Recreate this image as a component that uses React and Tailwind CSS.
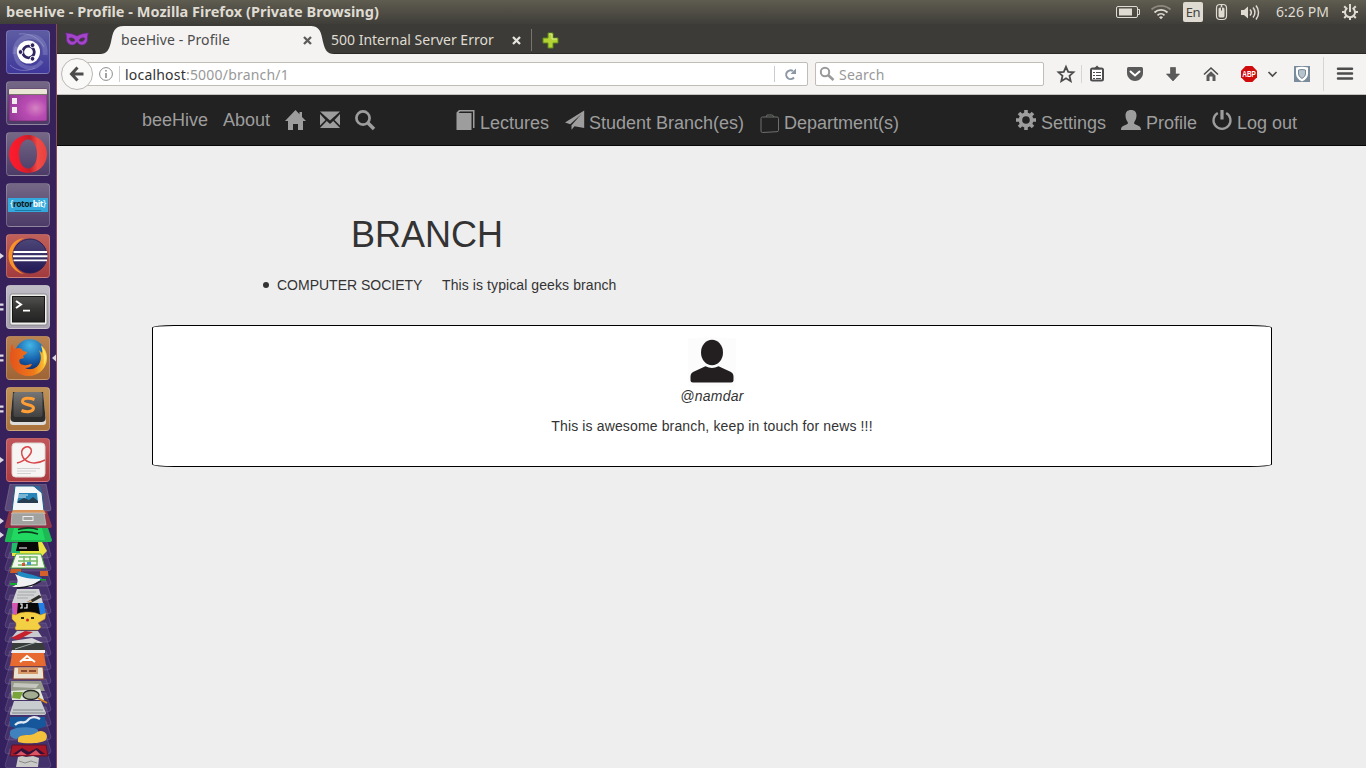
import React from "react";

const ui = "font-['Noto_Sans','Open_Sans',sans-serif] whitespace-nowrap";

/* ---------- launcher ---------- */

function Marker({ kind }) {
  return (
    <svg className="block h-[44px] w-[6px] shrink-0" viewBox="0 0 6 44" fill="#dcd9e2">
      {kind === "arrow" && <path d="M0 19L4 22L0 25Z" />}
      {kind === "bars" && <path d="M0 18.5h3.5v2.2H0zM0 23.3h3.5v2.2H0z" />}
      {kind === "focus" && <path d="M6 18.5L2 22L6 25.5Z" />}
    </svg>
  );
}

function Tile({ left, right, tone, children }) {
  return (
    <div className="flex h-[44px] w-[56px] shrink-0">
      <Marker kind={left} />
      <div className={"flex h-[44px] w-[44px] items-center justify-center overflow-hidden rounded-[4px] border border-white/20 " + tone}>
        {children}
      </div>
      <Marker kind={right} />
    </div>
  );
}

const plain = "bg-linear-to-b from-[#756886] to-[#4c3b67]";

function Launcher() {
  return (
    <div className="flex h-[744px] w-[57px] shrink-0 flex-col gap-[7px] overflow-hidden border-r border-[#8d4a5e] bg-linear-to-b from-[#36215a] via-[#38215b] to-[#33205e] pt-[6px]">
      <Tile tone="bg-linear-to-b from-[#5d5ca2] to-[#40379b]">
        <svg className="h-[42px] w-[42px] shrink-0" viewBox="0 0 42 42">
          <g fill="none" stroke="#aaa9db">
            <path d="M8 23C7 11 17 4 27 6c8 2 12 9 11 18" strokeWidth="5" opacity=".3" />
            <path d="M10 16c-4 8 0 17 8 20 7 2 13 0 17-6" strokeWidth="4" opacity=".35" />
            <path d="M12 3c10-1 20 3 25 13M3 34c6 6 16 7 25 3" opacity=".5" />
          </g>
          <circle cx="21.500" cy="21" r="11.500" fill="#fff" />
          <circle cx="21.500" cy="21" r="5.800" fill="none" stroke="#30265f" strokeWidth="2.800" />
          <g fill="#30265f" stroke="#fff" strokeWidth="1">
            <circle cx="13.500" cy="21" r="2.400" />
            <circle cx="25.500" cy="14.200" r="2.400" />
            <circle cx="25.500" cy="27.800" r="2.400" />
          </g>
        </svg>
      </Tile>

      <Tile tone={plain}>
        <svg className="h-[42px] w-[42px] shrink-0" viewBox="0 0 42 42">
          <defs>
            <radialGradient id="desk" cx=".7" cy=".6" r=".75">
              <stop offset="0" stopColor="#d582c2" />
              <stop offset=".4" stopColor="#b84bb2" />
              <stop offset="1" stopColor="#963b9a" />
            </radialGradient>
          </defs>
          <rect x="2" y="7" width="38" height="32" rx="1.5" fill="url(#desk)" stroke="#65265f" strokeWidth=".6" />
          <rect x="2" y="7" width="38" height="5.5" rx="1" fill="#e9e6d5" />
          <path d="M2 12.5h38" stroke="#7c7668" />
          <path d="M5 16h5v6H5zM5 25h5v6H5z" fill="#f2eef0" />
        </svg>
      </Tile>

      <Tile tone={plain}>
        <svg className="h-[42px] w-[42px] shrink-0" viewBox="0 0 42 42">
          <defs>
            <linearGradient id="op" x1="0" y1="0" x2="1" y2="0">
              <stop offset="0" stopColor="#ff1b2d" />
              <stop offset=".3" stopColor="#ee1c2b" />
              <stop offset=".55" stopColor="#c4202a" />
              <stop offset=".75" stopColor="#f04b46" />
              <stop offset="1" stopColor="#e8403e" />
            </linearGradient>
          </defs>
          <path fillRule="evenodd" fill="url(#op)" d="M21 2a19 19 0 1 1 0 38a19 19 0 1 1 0-38ZM21 6.500c-5.500 0-9 6.500-9 14.500s3.500 14.500 9 14.500s9-6.500 9-14.500s-3.500-14.500-9-14.500Z" />
        </svg>
      </Tile>

      <Tile tone={plain}>
        <div className="flex h-[14px] w-[40px] shrink-0 flex-col items-center overflow-hidden bg-[#35a9dc] pt-[1px]">
          <span className="font-['Noto_Sans','Liberation_Sans',sans-serif] text-[8.5px] leading-[10px] font-bold tracking-[-0.4px] whitespace-nowrap text-[#111a20]">
            <span className="font-normal text-white">{"{"}</span>rotor<span className="text-white">bit</span><span className="font-normal text-white">{"}"}</span>
          </span>
          <span className="mt-[1px] h-px w-[26px] bg-[#1d7ba6]" />
        </div>
      </Tile>

      <Tile left="arrow" tone="bg-linear-to-b from-[#c0605a] to-[#a23b3e]">
        <svg className="h-[42px] w-[42px] shrink-0" viewBox="0 0 42 42">
          <defs>
            <linearGradient id="ec" x1="0" y1="0" x2="0" y2="1">
              <stop offset="0" stopColor="#4d4677" />
              <stop offset="1" stopColor="#221956" />
            </linearGradient>
          </defs>
          <path fill="#f6942a" d="M17 3C7 4 1.500 12 1.500 21S8 37.500 17 39C9 35 5.500 29 5.500 21S9 7 17 3Z" />
          <circle cx="23" cy="21" r="17" fill="url(#ec)" stroke="#2a2058" />
          <path d="M6.500 17h33.500M6 21.200h34.500M6.500 25.400h33.500" stroke="#fff" strokeWidth="1.900" />
        </svg>
      </Tile>

      <Tile left="bars" tone="bg-linear-to-b from-[#c0bcc6] to-[#a8a2b0]">
        <svg className="h-[42px] w-[42px] shrink-0" viewBox="0 0 42 42">
          <defs>
            <linearGradient id="te" x1="0" y1="0" x2="0" y2="1">
              <stop offset="0" stopColor="#51524f" />
              <stop offset=".5" stopColor="#343533" />
              <stop offset="1" stopColor="#222" />
            </linearGradient>
          </defs>
          <rect x="3" y="8" width="37" height="31" rx="2" fill="#eeeeec" stroke="#77757a" strokeWidth=".7" />
          <rect x="5.500" y="10.500" width="32" height="25.500" fill="url(#te)" stroke="#161616" />
          <path d="M9 15l5 3.500-5 3.500" fill="none" stroke="#fff" strokeWidth="2" />
          <path d="M16 24.700h7" stroke="#fff" strokeWidth="1.800" />
        </svg>
      </Tile>

      <Tile left="bars" right="focus" tone="bg-linear-to-b from-[#ba8250] to-[#9e6435]">
        <svg className="h-[42px] w-[42px] shrink-0" viewBox="0 0 42 42">
          <defs>
            <radialGradient id="gl" cx=".5" cy=".2" r=".8">
              <stop offset="0" stopColor="#43b5e5" />
              <stop offset=".6" stopColor="#1763ad" />
              <stop offset="1" stopColor="#0d2e70" />
            </radialGradient>
            <linearGradient id="fx" x1="0" y1="0" x2="1" y2="0">
              <stop offset="0" stopColor="#e4531b" />
              <stop offset=".65" stopColor="#ee7a1a" />
              <stop offset="1" stopColor="#fbd43a" />
            </linearGradient>
          </defs>
          <circle cx="23" cy="17.500" r="15.300" fill="url(#gl)" />
          <path fill="url(#fx)" d="M5 7l2 5 4-1c3 0 4 1 5 3l4 1c0 2-3 3-4 4l1 2-4 1c-2 3 1 6 4 6 3 1 4-1 8-1-1 3-4 4-7 4 6 3 13 0 15-6 2-5 0-9-1-12l3 3c1-3 0-5-1-8 5 4 6 9 6 13 0 10-8 18-18.500 18S3 31 3 21c0-3 0-5 1-7C3 12 4 9 5 7Z" />
          <path fill="#ffe267" d="M34 9c5 4 7 12 3 19 0-7 0-12-3-19Z" />
        </svg>
      </Tile>

      <Tile left="bars" tone="bg-linear-to-b from-[#c09358] to-[#aa723c]">
        <svg className="h-[42px] w-[42px] shrink-0" viewBox="0 0 42 42">
          <defs>
            <linearGradient id="su" x1="0" y1="0" x2="0" y2="1">
              <stop offset="0" stopColor="#757575" />
              <stop offset="1" stopColor="#414141" />
            </linearGradient>
          </defs>
          <path d="M6 5h30l3 29q0 3-3 3H6q-3 0-3-3Z" fill="#dddcda" />
          <path d="M6 4h30l2.500 26q0 4-4 4h-27q-4 0-4-4Z" fill="#2c2c2c" />
          <rect x="6.500" y="4" width="29" height="25" rx="2" fill="url(#su)" />
          <path d="M27.500 11.500c-5-2-12-2-12 2 0 4 11 2.500 11 6.500 0 4-7 4.500-12 2.500" fill="none" stroke="#ff9e35" strokeWidth="3" />
        </svg>
      </Tile>

      <Tile left="arrow" tone="bg-linear-to-b from-[#c2575b] to-[#ac3b40]">
        <svg className="h-[42px] w-[42px] shrink-0" viewBox="0 0 42 42">
          <rect x="5" y="4" width="33" height="34" rx="3.500" fill="#f7f5f4" stroke="#ddd3d0" />
          <path d="M10 24c9-2 16-10 14-14-3-5-11-1-9 6 2 7 12 11 23 5" fill="none" stroke="#d8484b" strokeWidth="1.500" />
          <path d="M10 29.500h23M10 32h19M10 34.500h14" stroke="#d2d0d0" strokeWidth="1" />
        </svg>
      </Tile>

      <FoldedStack />
    </div>
  );
}

/* Collapsed launcher entries, each squeezed into a trapezoid. */
function FoldedStack() {
  const slabs = [62, 75, 90, 104, 118, 132, 146, 160, 174, 188, 202, 216, 230, 244, 258, 272];
  return (
    <svg className="mt-[-5px] block h-[284px] w-[56px] shrink-0" viewBox="0 0 56 284">
      <g fill="#dcd9e2">
        <path d="M0 34l4 3-4 3zM0 48l4 3-4 3z" />
      </g>
      <g fill="#a99dc0" fillOpacity=".14" stroke="#b7abd0" strokeOpacity=".2">
        {slabs.map((y) => (
          <path key={y} d={`M10 ${y - 7}H46L51 ${y + 9}Q51 ${y + 12} 47 ${y + 12}H8Q5 ${y + 12} 5 ${y + 9}Z`} />
        ))}
      </g>
      {/* writer */}
      <path d="M10 0H46L51 25Q51 27 48 27H8Q5 27 5 25Z" fill="#64557f" fillOpacity=".8" stroke="#8a7ea6" strokeWidth=".5" />
      <path d="M15 2h19l8 7 2 18H12Z" fill="#f4f7f8" stroke="#205b87" />
      <path d="M33 2h7l2 7Z" fill="#32699c" />
      <path d="M19 9h18l1 10H17Z" fill="#2784b8" />
      <path d="M18 17l6-3 5 2 4-3 5 4v2H18Z" fill="#263e50" />
      <path d="M18 11h10M18 13h8" stroke="#cbe4ef" />
      {/* drawer */}
      <path d="M9 27h38l5 15q0 2-3 2H7q-3 0-2-2Z" fill="#8e3548" />
      <path d="M13 26h31l2 4H11Z" fill="#d8945a" />
      <path d="M12 29h32l2 12H11Z" fill="#a1a1a0" stroke="#c8c8c6" strokeWidth=".7" />
      <rect x="23" y="32.500" width="10" height="4" fill="none" stroke="#eee" />
      {/* spotify */}
      <path d="M8 44h40l4 12q0 2-3 2H7q-3 0-2-2Z" fill="#1eb955" />
      <path d="M14 44h28l3 12H11Z" fill="#21d960" />
      <path d="M18 45.500c7-2 14-2 20 0M18 49c7-2 14-1 20 1" fill="none" stroke="#103c20" strokeWidth="1.700" />
      {/* ide */}
      <path d="M12 59l30-1 5 9-5 5H12Z" fill="#e9e344" />
      <path d="M12 59h8v10h-9Z" fill="#20bb6b" />
      <path d="M18 58h20l1 9H16Z" fill="#070707" />
      <path d="M19 64h8" stroke="#fff" />
      {/* calc */}
      <path d="M16 70h25l4 14H11Z" fill="#f3f7ec" stroke="#46a836" />
      <path d="M19 73h18v8H18M24 72v9M30 72v9M18 77h20" fill="none" stroke="#74b865" strokeWidth="1.500" />
      <path d="M22 79h3v3h-3z" fill="#d65238" />
      <path d="M27 78h4v3h-4z" fill="#3f96cc" />
      {/* mixed row */}
      <path d="M11 85h10v4H10Z" fill="#cc5c22" />
      <path d="M17 87l16 4 9 3-2 3-22-4Z" fill="#1e8bc2" />
      <path d="M40 87h8v5h-8Z" fill="#d4602b" />
      <path d="M15 90c8 4 14 5 28 5-5 2-9 4-11 8H12c8-3 6-8 3-13Z" fill="#f0f1f3" />
      <path d="M10 99h7v2h-7zM40 95h6v1.500h-6z" fill="#11ac2b" />
      <path d="M17 104q15-1 24-7" fill="none" stroke="#17191c" strokeWidth="1.300" />
      {/* intellij */}
      <path d="M12 119h32l2 12-5 3H12Z" fill="#257ee4" />
      <path d="M12 119h8v13h-7Z" fill="#d854ac" />
      <path d="M18 118h20l2 12H17Z" fill="#080808" />
      <path d="M20 120h2v4h-2M27 120v4h-3" fill="none" stroke="#fff" strokeWidth="1.200" />
      {/* editor */}
      <path d="M17 105h22l4 14H12Z" fill="#d1d2d4" />
      <path d="M18 108h18M17 111h17M17 114h11" stroke="#999ca0" strokeWidth=".8" />
      <path d="M27 118l12-7 3 2-11 6Z" fill="#2c2b28" />
      <path d="M27 118l4-2 1 2Z" fill="#ddb67b" />
      {/* yellow face */}
      <path d="M12 130l4 1c3-4 20-4 24 0l6-2-1 6-7 4 3 4-3 3H16q-2-2 0-4v-3l-4-4Z" fill="#f3d043" stroke="#b97f20" strokeWidth=".5" />
      <path d="M21 134h3M31 134h3" stroke="#2d2721" strokeWidth="1.800" />
      <circle cx="27.500" cy="136" r="1.500" fill="#c92c20" />
      <path d="M17 147h21l4 6H12Z" fill="#c9c9d0" />
      <path d="M11 154l14-7 8 1-15 8Z" fill="#c5202b" />
      <path d="M12 157l20-3 11 5H12Z" fill="#d9d9dc" />
      {/* scanner */}
      <path d="M13 159h30l2 7H11Z" fill="#383c3b" />
      <path d="M15 165l22-7" stroke="#9faaa8" />
      <path d="M12 166h33v3H11Z" fill="#eee" />
      {/* software */}
      <path d="M12 169h32l2 13H10Z" fill="#e76b31" />
      <path d="M20 178l7-6 8 6M23 176h10" fill="none" stroke="#fff" strokeWidth="2" />
      {/* present */}
      <path d="M14 183h29l1 12H13Z" fill="#eae2d5" stroke="#8b3b1f" />
      <path d="M18 184h20v6H18Z" fill="#d89a69" />
      <path d="M21 187h6M29 187h7" stroke="#8b4930" strokeWidth="2" />
      <path d="M11 197h30l4 10H11Z" fill="#94998a" />
      <path d="M14 199l25 1-3 4-23-1Z" fill="#c5c7bf" />
      {/* magnifier */}
      <path d="M11 207l29-2 4 11H12Z" fill="#e0e7d8" />
      <path d="M13 208h10l-3 7-8-1Z" fill="#79a43c" />
      <ellipse cx="31" cy="211" rx="8" ry="4.500" fill="#a2ad91" stroke="#272a27" strokeWidth="1.400" />
      <path d="M38 214l9 5" stroke="#d58724" strokeWidth="2" />
      {/* disk */}
      <path d="M14 217h27l5 12q0 2-3 2H12q-3 0-2-2Z" fill="#c9ccce" />
      <path d="M13 226h30M12 229h33" stroke="#7e8589" />
      {/* steam */}
      <path d="M10 233h35l1 9q-16 8-36 0Z" fill="#15579a" />
      <path d="M15 241c6-6 8 0 12-4 3-4 8-5 13-2" fill="none" stroke="#e1eaf3" strokeWidth="2.400" />
      {/* python */}
      <path d="M11 246c8-4 23-3 27 0v5H24c-5 0-5 4-8 4-7-1-7-7-5-9Z" fill="#3f82be" />
      <path d="M18 255c0-4 7-4 12-4 7-1 6-4 11-4 6 1 7 5 5 9-5 4-22 4-28 2Z" fill="#f4c13d" />
      {/* red */}
      <path d="M12 261h34l2 11H10Z" fill="#a81725" stroke="#591430" />
      <path d="M13 270l9-6 7 4 8-4 8 6H30l-4 1Z" fill="#33113a" />
      <path d="M16 271l5-4 6 4zM29 271l7-5 5 5z" fill="#db5362" />
      <path d="M18 273l4-1 4 1 7-1 6 2-1 9H16Z" fill="#c9cac8" />
      <path d="M19 277l6 2 6-2 6 2" fill="none" stroke="#858986" />
    </svg>
  );
}

/* ---------- top panel ---------- */

function TopPanel() {
  return (
    <div className={"flex h-[24px] w-full shrink-0 items-center bg-linear-to-b from-[#5f5c50] to-[#3f3e39] text-[#dfdbd2] " + ui}>
      <span className="w-[1109px] pb-[2px] pl-[6px] text-[14.5px] leading-[22px] font-bold tracking-[0.02px]">
        beeHive - Profile - Mozilla Firefox (Private Browsing)
      </span>
      <svg className="h-[24px] w-[74px]" viewBox="0 0 74 24" fill="none" stroke="#dfdbd2">
        <rect x="7.500" y="6.500" width="21" height="11" rx="1.500" />
        <path d="M10 8.500h13v7H10z" fill="#dfdbd2" stroke="none" />
        <path d="M29 9.500h1.500v5H29" />
        <path d="M42.500 9.500a14 14 0 0 1 19 0" stroke="#8d897f" strokeWidth="1.800" />
        <path d="M45.500 12.500a9.500 9.500 0 0 1 13 0M48.500 15.300a5 5 0 0 1 7 0" strokeWidth="1.800" />
        <path d="M50 17.200a3 3 0 0 1 4 0l-2 2Z" fill="#dfdbd2" stroke="none" />
      </svg>
      <span className="flex h-[20px] w-[20px] items-center justify-center rounded-[2px] bg-[#dfdbd2] text-[13px] leading-[20px] tracking-[-0.4px] text-[#45443f]">
        En
      </span>
      <svg className="h-[24px] w-[73px]" viewBox="0 0 73 24" fill="none" stroke="#dfdbd2">
        <rect x="13.500" y="4.500" width="10" height="15" rx="3.500" strokeWidth="1.200" />
        <rect x="15.500" y="7.500" width="6" height="10" rx="1.500" fill="#dfdbd2" stroke="none" />
        <path d="M18.500 5v2" strokeWidth="1.600" />
        <path d="M18.500 7.500v3" stroke="#4d4b43" />
        <path d="M38 10h3l4-3.500v12L41 15h-3Z" fill="#dfdbd2" stroke="none" />
        <path d="M47 9.500a4.500 4.500 0 0 1 0 6M50 7.500a7.500 7.500 0 0 1 0 10M53 5.500a11 11 0 0 1 0 14" strokeWidth="1.500" />
      </svg>
      <span className="w-[64px] text-[14px] leading-[24px] tracking-[0.05px]">6:26 PM</span>
      <svg className="h-[24px] w-[20px]" viewBox="0 0 20 24" fill="none" stroke="#dfdbd2">
        <path d="M7.400 8a5 5 0 1 0 5.200 0" strokeWidth="2" />
        <path d="M10 4v8" strokeWidth="2" />
        <path d="M2 12h3M15 12h3M4.200 6.200l2 2M15.800 6.200l-2 2M4.200 18l2-2M15.800 18l-2-2M10 17v3" strokeWidth="2" />
      </svg>
    </div>
  );
}

/* ---------- browser chrome ---------- */

function CloseX({ color }) {
  return (
    <svg className="h-[9px] w-[9px] shrink-0" viewBox="0 0 9 9" stroke={color} strokeWidth="2.300">
      <path d="M1 1l7 7M8 1L1 8" />
    </svg>
  );
}

function TabStrip() {
  return (
    <div className={"flex h-[30px] items-end border-b border-[#2b2a27] bg-[#3c3b37] " + ui}>
      <svg className="mb-[6px] ml-[8px] h-[15px] w-[24px]" viewBox="0 0 24 15">
        <path fillRule="evenodd" fill="#a245c9" stroke="#6d258f" strokeWidth=".7" d="M.5 1c4 0 8 1 11.500 3C15.500 2 19.500 1 23.500 1c-1 2-1 4-1 6 0 4-3 6-6 6-2 0-3.500-1.500-4.500-3-1 1.500-2.500 3-4.500 3-3 0-6-2-6-6 0-2 0-4-1-6ZM4 6.500c1 3 4 4 6 2C9 6 6 5 4 6.500ZM20 6.500c-2-1.500-5-.5-6 2 2 2 5 1 6-2Z" />
      </svg>
      <svg className="mb-[-1px] ml-[11px] h-[28px] w-[24px]" viewBox="0 0 24 28">
        <path d="M0 28C7 28 9 24 11 16C13 6 14 0 24 0V28Z" fill="#f4f3f2" />
      </svg>
      <div className="z-10 mb-[-1px] flex h-[28px] w-[188px] items-center bg-[#f4f3f2]">
        <span className="ml-[-3px] w-[182px] shrink-0 text-[14px] leading-[28px] tracking-[0.08px] text-[#4c4c4c]">beeHive - Profile</span>
        <CloseX color="#5c5b57" />
      </div>
      <svg className="mb-[-1px] ml-[-2px] h-[28px] w-[24px]" viewBox="0 0 24 28">
        <path d="M24 28C17 28 15 24 13 16C11 6 10 0 0 0V28Z" fill="#f4f3f2" />
      </svg>
      <div className="mb-[-1px] flex h-[28px] items-center">
        <span className="ml-[-3px] w-[181px] text-[14px] leading-[28px] text-[#dfdbd2]">500 Internal Server Error</span>
        <CloseX color="#e6e3dc" />
        <span className="ml-[10px] h-[22px] w-px bg-[#77756e]" />
        <svg className="ml-[10px] h-[17px] w-[17px]" viewBox="0 0 17 17">
          <path d="M6 1h5v5h5v5h-5v5H6v-5H1V6h5Z" fill="#b3d335" stroke="#5f8a1d" />
          <path d="M7 2h3v5h5" fill="none" stroke="#dcec91" />
        </svg>
      </div>
    </div>
  );
}

function NavBar() {
  return (
    <div className={"flex h-[41px] items-center border-b border-[#c4c1bc] bg-[#f4f3f2] " + ui}>
      <div className="z-10 ml-[4px] flex h-[32px] w-[32px] shrink-0 items-center justify-center rounded-full border border-[#bbb8b2] bg-[#f9f9f8]">
        <svg className="h-[16px] w-[16px]" viewBox="0 0 16 16" fill="none" stroke="#4c4c4c" strokeWidth="3">
          <path d="M8.500 1.500L2.500 8l6 6.500M3 8h11.500" />
        </svg>
      </div>
      <div className="-ml-[7px] flex h-[24px] w-[722px] shrink-0 items-center rounded-[2px] border border-[#c0bdb7] bg-white">
        <svg className="ml-[12px] h-[14px] w-[14px]" viewBox="0 0 14 14" fill="none" stroke="#8b8b8b">
          <circle cx="7" cy="7" r="6.400" />
          <path d="M7 6v5M7 3v1.600" strokeWidth="1.600" />
        </svg>
        <span className="ml-[6px] h-[16px] w-px bg-[#d0d0d0]" />
        <span className="ml-[5px] w-[649px] pt-[2px] text-[14px] leading-[22px] tracking-[0.2px] text-[#999]">
          <span className="text-[#333]">localhost</span>:5000/branch/1
        </span>
        <span className="h-[16px] w-px bg-[#c9ccd0]" />
        <svg className="ml-[9px] h-[13px] w-[13px]" viewBox="0 0 13 13">
          <path d="M10 9.500A4.400 4.400 0 1 1 9 3" fill="none" stroke="#8d98a4" strokeWidth="2" />
          <path d="M12 .5v5.500H6.500Z" fill="#8d98a4" />
        </svg>
      </div>
      <div className="ml-[7px] flex h-[24px] w-[229px] shrink-0 items-center rounded-[2px] border border-[#c0bdb7] bg-white">
        <svg className="ml-[3px] h-[16px] w-[16px]" viewBox="0 0 16 16" fill="none" stroke="#999">
          <circle cx="6" cy="6" r="4.200" strokeWidth="2" />
          <path d="M9 9l5.500 5" strokeWidth="2.600" />
        </svg>
        <span className="ml-[4px] pt-[2px] text-[14px] leading-[22px] tracking-[0.2px] text-[#999]">Search</span>
      </div>
      <svg className="h-[40px] w-[322px] shrink-0" viewBox="0 0 322 40">
        <path d="M22 12.800l2.200 5 5.300.5-4 3.600 1.200 5.300-4.700-2.900-4.700 2.900 1.200-5.300-4-3.600 5.300-.5Z" fill="none" stroke="#4c4c4c" strokeWidth="1.800" />
        <path d="M37.500 11v18M279.500 3v34" stroke="#d8d5d1" />
        <rect x="47" y="14.500" width="12" height="12" rx="1.500" fill="#fff" stroke="#4c4c4c" strokeWidth="2" />
        <path d="M49 15.500l4-4 4 4Z" fill="#4c4c4c" />
        <path d="M49 18.500h2m1 0h5M49 21.500h2m1 0h5M49 24.500h2m1 0h5" stroke="#4c4c4c" strokeWidth="1" />
        <path d="M84.500 13h13q1.500 0 1.500 1.500V19c0 4.500-4 8-8 8s-8-3.500-8-8v-4.500q0-1.500 1.500-1.500Z" fill="#5a5a5a" />
        <path d="M86.500 17.500l4.500 4 4.500-4" fill="none" stroke="#fff" strokeWidth="2" strokeLinecap="round" />
        <path d="M126.500 13.500h5v6.500h4L129 27l-6.500-7h4Z" fill="#5a5a5a" stroke="#4c4c4c" strokeWidth=".6" />
        <path d="M160 20.500l7-6.500 7 6.500" fill="none" stroke="#4c4c4c" strokeWidth="1.600" />
        <path d="M162.500 21.500l4.500-4.200 4.500 4.200V27h-3v-4.500h-3V27h-3Z" fill="#5a5a5a" />
        <path d="M201.700 12h6.600l4.700 4.700v6.600l-4.700 4.700h-6.600l-4.700-4.700v-6.600Z" fill="#d00b0b" />
        <text x="198.300" y="23.300" fontFamily="Liberation Sans" fontWeight="700" fontSize="8.500" textLength="13.500" lengthAdjust="spacingAndGlyphs" fill="#fff">ABP</text>
        <path d="M224.500 18l4 4 4-4" fill="none" stroke="#4c4c4c" strokeWidth="1.700" />
        <path d="M250 12h16v16h-16Z" fill="#7a8c9b" />
        <path d="M252 13.500q6-1.500 12 0v6q0 5-6 8-6-3-6-8Z" fill="#fff" />
        <path d="M254.500 16q3.500-1 7 0v4q0 2.500-3.500 4.500-3.500-2-3.500-4.500Z" fill="#b6c2cc" stroke="#778896" />
        <path d="M294 14.700h14M294 19.500h14M294 24.400h14" stroke="#4c4c4c" strokeWidth="2.500" strokeLinecap="round" />
      </svg>
    </div>
  );
}

/* ---------- web page ---------- */

const icons = {
  home: <path d="M10.500 0L0 11h3v9h5v-6h5v6h5v-9h3L17 7V2h-2.500v2.200Z" />,
  mail: (
    <path d="M0 1.500h20l-10 9ZM0 4l5.500 6L0 15.500ZM20 4v11.500L14.500 10ZM6.800 11l3.200 3 3.200-3L20 18H0Z" />
  ),
  search: (
    <g fill="none" stroke="currentColor">
      <circle cx="8" cy="8" r="6.600" strokeWidth="2.700" />
      <path d="M13 13l6 6" strokeWidth="3.600" />
    </g>
  ),
  book: <path d="M3 0h15.500v18H17V1.500H4L2.500 3H15.500v17H.500V2.500Z" />,
  send: <path d="M19.200 .5L0 12.500l5.200 1.800L16.500 4 6.500 15.200v4.600l3-3.600 9.700 1.800Z" />,
  briefcase: (
    <g fill="none" stroke="#6c716b" strokeWidth="1">
      <path d="M1 8.500q0-1.500 1.500-1.500H17q1.500 0 1.500 1.500V20.500q0 1-1.500 1.200L2.500 22.500Q1 22.500 1 21ZM6 7l1-2h5.500l1.500 2" />
    </g>
  ),
  gear: (
    <g fill="none" stroke="currentColor">
      <circle cx="10" cy="10" r="5.600" strokeWidth="3.600" />
      <path d="M10 0v4M10 16v4M0 10h4M16 10h4M3 3l3 3M14 14l3 3M17 3l-3 3M6 14l-3 3" strokeWidth="3.600" />
    </g>
  ),
  user: <path d="M10 0c3.800 0 5.500 2.200 5.500 5.500S14.100 11 13.300 12c-.5 1.500 0 2 1.200 2.500 3.500 1.500 5.500 2 5.500 5.500H0c0-3.500 2-4 5.500-5.500 1.200-.5 1.700-1 1.200-2.500C5.900 11 4.500 8.800 4.500 5.500S6.200 0 10 0Z" />,
  power: (
    <g fill="none" stroke="currentColor" strokeWidth="2.300">
      <path d="M5.800 3A8.500 8.500 0 1 0 14.200 3" />
      <path d="M10 0v9.500" strokeWidth="3.200" />
    </g>
  ),
};

function Glyph({ name }) {
  return (
    <svg className="block h-[20px] w-[20px] shrink-0 overflow-visible" viewBox="0 0 20 20" fill="currentColor">
      {icons[name]}
    </svg>
  );
}

function Entry({ icon, label, width, gap = "pl-[4px]" }) {
  return (
    <a className={"flex shrink-0 " + width}>
      <span className="pt-[15px]"><Glyph name={icon} /></span>
      <span className={"pt-[18px] leading-[20px] " + gap}>{label}</span>
    </a>
  );
}

function SiteNav() {
  return (
    <nav className="flex h-[51px] shrink-0 border-b border-[#080808] bg-[#222] pl-[85px] text-[18px] whitespace-nowrap text-[#9d9d9d]">
      <a className="w-[81px] pt-[15px] leading-[20px]">beeHive</a>
      <a className="w-[62px] pt-[15px] leading-[20px]">About</a>
      <a className="w-[35px] pt-[15px]"><Glyph name="home" /></a>
      <a className="w-[35px] pt-[15px]"><Glyph name="mail" /></a>
      <a className="w-[101px] pt-[15px]"><Glyph name="search" /></a>
      <Entry icon="book" label="Lectures" width="w-[109px]" />
      <Entry icon="send" label="Student Branch(es)" width="w-[195px]" />
      <Entry icon="briefcase" label="Department(s)" width="w-[256px]" />
      <Entry icon="gear" label="Settings" width="w-[105px]" gap="pl-[5px]" />
      <Entry icon="user" label="Profile" width="w-[91px]" gap="pl-[5px]" />
      <Entry icon="power" label="Log out" width="w-[90px]" gap="pl-[5px]" />
    </nav>
  );
}

function Page() {
  return (
    <div className="flex flex-1 flex-col bg-[#eee] font-['Liberation_Sans',Arial,sans-serif] text-[14px] leading-[20px] text-[#333]">
      <SiteNav />
      <main className="flex flex-col pr-[94px] pl-[95px]">
        <h1 className="mt-[69px] pl-[199px] text-[36px] leading-[40px]">BRANCH</h1>
        <div className="mt-[20px] flex items-center pl-[111px]">
          <span className="h-[6px] w-[6px] rounded-full bg-[#333]" />
          <span className="ml-[8px] w-[165px]">COMPUTER SOCIETY</span>
          <span className="tracking-[0.09px]">This is typical geeks branch</span>
        </div>
        <section className="mt-[30px] flex h-[142px] flex-col items-center rounded-[2%] border border-black bg-white pt-[12px]">
          <svg className="h-[48px] w-[48px] bg-[#fcfcfc]" viewBox="0 0 48 48" fill="#231f20">
            <ellipse cx="24" cy="14.500" rx="11" ry="12.800" />
            <path d="M17.500 28.200q6.500 3.500 13 0L43 34q2.500 1.500 2.500 4v4q0 2.500-2.500 2.500H5q-2.500 0-2.500-2.500v-4q0-2.500 2.500-4Z" />
          </svg>
          <em className="tracking-[0.25px]">@namdar</em>
          <p className="mt-[10px] tracking-[0.14px]">This is awesome branch, keep in touch for news !!!</p>
        </section>
      </main>
    </div>
  );
}

export default function App() {
  return (
    <div className="flex h-[768px] w-[1366px] flex-col overflow-hidden">
      <TopPanel />
      <div className="flex h-[744px]">
        <Launcher />
        <div className="flex w-[1309px] flex-col">
          <TabStrip />
          <NavBar />
          <Page />
        </div>
      </div>
    </div>
  );
}
